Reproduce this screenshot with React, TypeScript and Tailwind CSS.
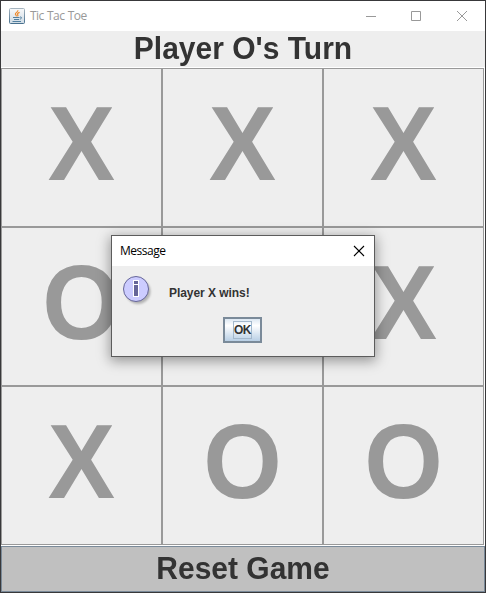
const cells = ['X', 'X', 'X', 'O', '', 'X', 'X', 'O', 'O'];

function JavaIcon() {
  return (
    <svg width="16" height="16" viewBox="0 0 16 16" className="ml-2 shrink-0">
      <defs>
        <linearGradient id="javaBg" x1="0" y1="0" x2="0" y2="1">
          <stop offset="0" stopColor="#f8f9fa" />
          <stop offset="1" stopColor="#cfdbe4" />
        </linearGradient>
        <linearGradient id="javaEdge" x1="0" y1="0" x2="0" y2="1">
          <stop offset="0" stopColor="#a5b4bf" />
          <stop offset="1" stopColor="#48708e" />
        </linearGradient>
      </defs>
      <rect x="0.5" y="0.5" width="15" height="15" rx="1" fill="url(#javaBg)" stroke="url(#javaEdge)" />
      <path d="M8.8 2.2C9.4 4 6 4.6 6.4 6.2C6.6 7 7.5 7.3 7.3 8.3M10.6 4.4C8.8 5 8 5.8 8.7 6.6C9.2 7.2 8.9 7.8 8.4 8.2" fill="none" stroke="#ee8a2c" strokeWidth="1.2" />
      <path d="M4 9.5H10.5M5 11.5H10M3.5 13.5H12M11 9C13.4 8.8 12.8 10.8 10.8 11.2" fill="none" stroke="#527f9f" strokeWidth="1" />
    </svg>
  );
}

function InfoIcon() {
  return (
    <svg width="32" height="32" viewBox="0 0 32 32" className="shrink-0">
      <defs>
        <filter id="infoShadow" x="-20%" y="-20%" width="150%" height="150%">
          <feGaussianBlur stdDeviation="1.2" />
        </filter>
      </defs>
      <circle cx="16" cy="16.5" r="12.5" fill="#999999" opacity="0.7" filter="url(#infoShadow)" />
      <circle cx="14" cy="14" r="12.5" fill="#ccccff" stroke="#666699" />
      <path d="M11 5H17V10H11ZM11 9H17V22H11Z" fill="#ffffff" />
      <path d="M12 6H16V9H12ZM12 10H16V21H12Z" fill="#666699" />
    </svg>
  );
}

function Dialog() {
  return (
    <div className="absolute left-[110px] top-[234px] flex h-[122px] w-[264px] flex-col border border-[#5c5c5c] bg-[#eeeeee] shadow-[0_3px_12px_1px_rgba(0,0,0,0.38)]">
      <div className="flex h-[30px] shrink-0 items-center justify-between bg-white pl-2 pr-[9px]">
        <span className="font-['Open_Sans',sans-serif] text-[12px] leading-4 tracking-[-0.5px] text-black">Message</span>
        <svg width="12" height="12" viewBox="0 0 12 12">
          <path d="M1 1L11 11M11 1L1 11" stroke="#000000" strokeWidth="1.1" />
        </svg>
      </div>
      <div className="flex h-[51px] shrink-0 pl-[10px] pt-[9px]">
        <InfoIcon />
        <span className="ml-[15px] mt-[10px] text-[12px] font-bold leading-4 tracking-[-0.05px] text-[#333333]">Player X wins!</span>
      </div>
      <div className="flex pl-[111px]">
        <button className="flex h-[26px] w-[39px] items-center justify-center border-2 border-[#7a8a99] bg-gradient-to-b from-[#dde8f3] via-white via-30% to-[#b8cfe5]">
          <span className="flex h-[18px] w-[19px] items-center justify-center border border-[#a3b8cc] text-[12px] font-bold leading-4 tracking-[-0.4px] text-[#333333]">OK</span>
        </button>
      </div>
    </div>
  );
}

export default function App() {
  return (
    <div className="relative flex h-[593px] w-[486px] flex-col overflow-hidden border border-[#38383a] bg-white font-['Liberation_Sans',Arial,sans-serif]">
      <header className="flex h-[30px] shrink-0 items-center">
        <JavaIcon />
        <span className="ml-[5px] font-['Open_Sans',sans-serif] text-[12px] leading-4 tracking-[-0.6px] text-[#999999] [word-spacing:1px]">Tic Tac Toe</span>
        <svg width="120" height="12" viewBox="0 0 120 12" className="ml-auto mr-[2px]" fill="none" stroke="#999999">
          <path d="M3 6.5H13M48.5 1.5H57.5V10.5H48.5ZM94 1L104 11M104 1L94 11" />
        </svg>
      </header>
      <div className="flex h-9 shrink-0 items-center justify-center bg-[#eeeeee] text-[30px] font-bold leading-9 text-[#333333]">
        <span className="scale-y-[1.04]">Player O's Turn</span>
      </div>
      <main className="mt-px grid w-[483px] shrink-0 grid-cols-3">
        {cells.map((mark, i) => (
          <div key={i} className="flex h-[159px] items-center justify-center border border-[#999999] bg-[#eeeeee] pb-[7px] text-[101px] font-bold leading-none text-[#999999]">
            <span className="scale-y-[1.04]">{mark}</span>
          </div>
        ))}
      </main>
      <button className="mt-px flex h-[46px] shrink-0 items-center justify-center border border-[#7a8a99] bg-[#c0c0c0] text-[30px] font-bold leading-9 text-[#333333]">
        <span className="scale-y-[1.04]">Reset Game</span>
      </button>
      <Dialog />
    </div>
  );
}
